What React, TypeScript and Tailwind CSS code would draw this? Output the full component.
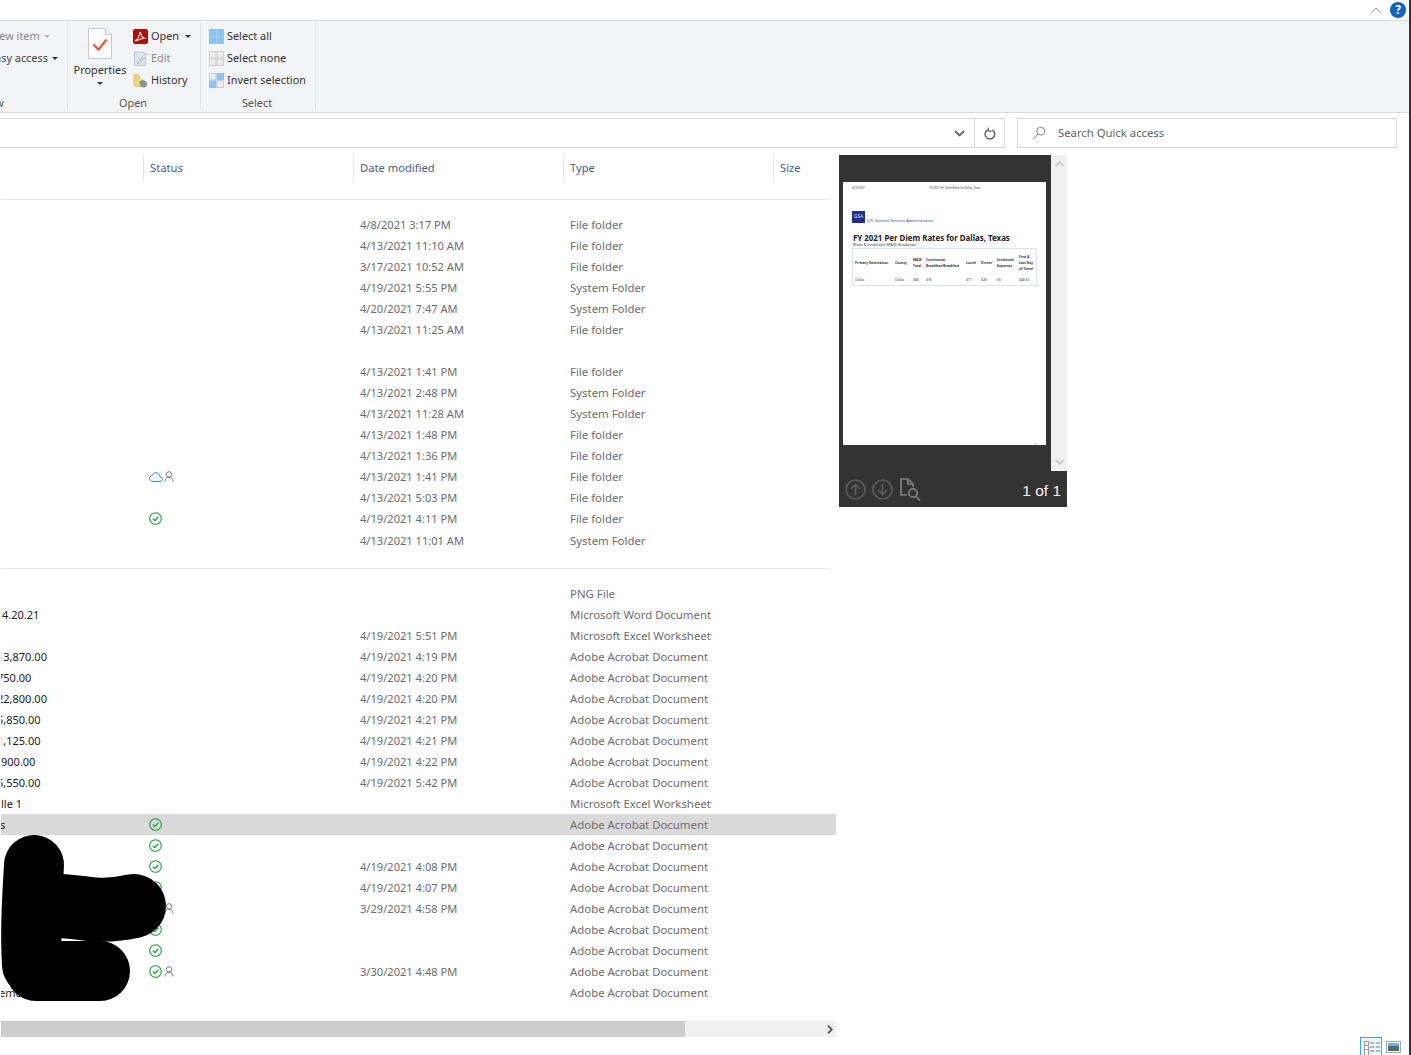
import React from "react";

const font = "font-['Noto_Sans','Open_Sans',sans-serif]";

type Row = { date?: string; type?: string; name?: string; nameClass?: string; status?: "cloud" | "check" | "checkUser" | "user"; selected?: boolean; tall?: boolean };

const folders1: Row[] = [
  { date: "4/8/2021 3:17 PM", type: "File folder" },
  { date: "4/13/2021 11:10 AM", type: "File folder" },
  { date: "3/17/2021 10:52 AM", type: "File folder" },
  { date: "4/19/2021 5:55 PM", type: "System Folder" },
  { date: "4/20/2021 7:47 AM", type: "System Folder" },
  { date: "4/13/2021 11:25 AM", type: "File folder" },
  {},
  { date: "4/13/2021 1:41 PM", type: "File folder" },
  { date: "4/13/2021 2:48 PM", type: "System Folder" },
  { date: "4/13/2021 11:28 AM", type: "System Folder" },
  { date: "4/13/2021 1:48 PM", type: "File folder" },
  { date: "4/13/2021 1:36 PM", type: "File folder" },
  { date: "4/13/2021 1:41 PM", type: "File folder", status: "cloud" },
  { date: "4/13/2021 5:03 PM", type: "File folder" },
  { date: "4/19/2021 4:11 PM", type: "File folder", status: "check" },
  { date: "4/13/2021 11:01 AM", type: "System Folder", tall: true },
];

const acrobat = "Adobe Acrobat Document";
const files: Row[] = [
  { type: "PNG File" },
  { type: "Microsoft Word Document", name: "4.20.21", nameClass: "ml-[1px]" },
  { date: "4/19/2021 5:51 PM", type: "Microsoft Excel Worksheet" },
  { date: "4/19/2021 4:19 PM", type: acrobat, name: "13,870.00", nameClass: "-ml-[4px]" },
  { date: "4/19/2021 4:20 PM", type: acrobat, name: "750.00", nameClass: "-ml-[4px]" },
  { date: "4/19/2021 4:20 PM", type: acrobat, name: "22,800.00", nameClass: "-ml-[4px]" },
  { date: "4/19/2021 4:21 PM", type: acrobat, name: "5,850.00", nameClass: "-ml-[4px]" },
  { date: "4/19/2021 4:21 PM", type: acrobat, name: "1,125.00", nameClass: "-ml-[4px]" },
  { date: "4/19/2021 4:22 PM", type: acrobat, name: "900.00" },
  { date: "4/19/2021 5:42 PM", type: acrobat, name: "5,550.00", nameClass: "-ml-[4px]" },
  { type: "Microsoft Excel Worksheet", name: "lle 1" },
  { type: acrobat, name: "s", nameClass: "-ml-[1px]", status: "check", selected: true },
  { type: acrobat, status: "check" },
  { date: "4/19/2021 4:08 PM", type: acrobat, status: "check" },
  { date: "4/19/2021 4:07 PM", type: acrobat, status: "check" },
  { date: "3/29/2021 4:58 PM", type: acrobat, status: "checkUser" },
  { type: acrobat, status: "check" },
  { type: acrobat, status: "check" },
  { date: "3/30/2021 4:48 PM", type: acrobat, status: "checkUser" },
  { type: acrobat, name: "ements", nameClass: "-ml-[2px]" },
];

function CheckIcon() {
  return (
    <svg width="13" height="13" viewBox="0 0 13 13" fill="none" stroke="#1f9d40" strokeWidth="1.100">
      <circle cx="6.500" cy="6.500" r="5.800" />
      <path d="M3.800 6.600l2 2 3.600-3.800" strokeWidth="1.300" />
    </svg>
  );
}

function UserIcon() {
  return (
    <svg width="10" height="11" viewBox="0 0 10 11" fill="none" stroke="#7d7d7d" strokeWidth="1">
      <circle cx="5" cy="3.400" r="2.700" />
      <path d="M1 10.500c0-2.600 1.600-4.400 4-4.400s4 1.800 4 4.400" />
    </svg>
  );
}

function CloudIcon() {
  return (
    <svg width="14" height="10" viewBox="0 0 14 10" fill="none" stroke="#2a86d8" strokeWidth="1">
      <path d="M3.400 9.400H11c1.400 0 2.400-1 2.400-2.200S12.400 5 11 5c-.2-2.400-2-4.300-4.300-4.300C5 .7 3.800 1.800 3.400 3.400 1.800 3.600.6 4.800.6 6.400s1.200 3 2.800 3z" />
    </svg>
  );
}

function Status({ kind }: { kind?: Row["status"] }) {
  if (!kind) return null;
  return (
    <div className="flex items-center gap-[1px]">
      <span className="flex w-[14px]">{kind === "cloud" ? <CloudIcon /> : <CheckIcon />}</span>
      {kind !== "check" && <UserIcon />}
    </div>
  );
}

function FileRow({ row }: { row: Row }) {
  return (
    <div className={`flex h-[21px] items-center text-[11.400px] text-[#6d6d6d] ${row.selected ? "bg-[#d9d9d9]" : ""} ${row.tall ? "mt-[1px]" : ""}`}>
      <div className="w-[148px] shrink-0 overflow-hidden whitespace-nowrap pt-[2px] text-[11px] text-[#1c1c1c]">
        {row.name && <span className={`block ${row.nameClass ?? ""}`}>{row.name}</span>}
      </div>
      <div className="w-[211px] shrink-0"><Status kind={row.status} /></div>
      <div className="w-[210px] shrink-0 whitespace-nowrap pt-[2px] text-[11.100px]">{row.date}</div>
      <div className="whitespace-nowrap">{row.type}</div>
    </div>
  );
}

function HeaderCell({ label, className }: { label: string; className: string }) {
  return (
    <div className={`flex h-[26px] shrink-0 items-center border-l border-[#e5e5e5] pl-[6px] text-[11.200px] text-[#4c607a] ${className}`}>
      {label}
    </div>
  );
}

function RibbonItem({ icon, label, caret, muted }: { icon: React.ReactNode; label: string; caret?: boolean; muted?: boolean }) {
  return (
    <div className={`flex h-[22px] items-center gap-[3px] whitespace-nowrap text-[10.900px] ${muted ? "text-[#8a8a8a]" : "text-[#333]"}`}>
      <span className="flex h-[16px] w-[16px] items-center justify-center">{icon}</span>
      {label}
      {caret && <span className="ml-[3px] h-0 w-0 border-x-[3px] border-t-[3px] border-x-transparent border-t-[#333]" />}
    </div>
  );
}

function PdfIcon() {
  return (
    <svg width="15" height="15" viewBox="0 0 15 15">
      <rect width="15" height="15" rx="2" fill="#b30b00" />
      <path d="M2.500 11.500c2-1 3.500-4 4.300-7.500.2-1 1-.8 1 .2 0 2.500 2 5 4.700 5.300-3-.2-6.500.5-8.500 2-.7.500-1.500.4-1.500 0z" fill="none" stroke="#fff" strokeWidth="1.100" />
    </svg>
  );
}

function EditIcon() {
  return (
    <svg width="15" height="15" viewBox="0 0 15 15" fill="none">
      <path d="M1.500 1h8l3 3v10.500h-11z" fill="#dde7f3" stroke="#b9c6d6" />
      <path d="M5 11l8-9 1.500 1.300-8 9-2 .5z" fill="#fff" stroke="#a9b7c8" />
    </svg>
  );
}

function HistoryIcon() {
  return (
    <svg width="15" height="15" viewBox="0 0 15 15">
      <path d="M1 1.500h4l1 2h1v10H3l-2-1z" fill="#f3d677" stroke="#d9b44e" strokeWidth=".7" />
      <circle cx="10.500" cy="11" r="3.500" fill="#8e9297" />
      <path d="M6.500 9.500l3-3 1 1-3 3z" fill="#3f9d4a" />
    </svg>
  );
}

function GridIcon({ kind }: { kind: "all" | "none" | "invert" }) {
  const on = "#8cc4f0";
  const off = "#ececec";
  const fills = kind === "all" ? [on, on, on, on] : kind === "none" ? [off, off, off, off] : [off, on, on, off];
  return (
    <svg width="15" height="15" viewBox="0 0 15 15">
      <rect x=".5" y=".5" width="6.500" height="6.500" fill={fills[0]} stroke={kind === "all" ? on : "#cfcfcf"} />
      <rect x="8" y=".5" width="6.500" height="6.500" fill={fills[1]} stroke={kind === "none" ? "#cfcfcf" : on} />
      <rect x=".5" y="8" width="6.500" height="6.500" fill={fills[2]} stroke={kind === "none" ? "#cfcfcf" : on} />
      <rect x="8" y="8" width="6.500" height="6.500" fill={fills[3]} stroke={kind === "all" ? on : "#cfcfcf"} />
    </svg>
  );
}

function Ribbon() {
  return (
    <div className="flex h-[93px] border-b border-t border-[#dadbdc] bg-[#f3f4f6]">
      <div className="mb-[3px] mt-[2px] flex w-[68px] flex-col justify-between overflow-hidden border-r border-[#dfe0e2]">
        <div className="pt-[2px]">
          <div className="flex h-[22px] items-center gap-[4px] whitespace-nowrap text-[10.900px] text-[#8a8a8a]">
            <span className="-ml-[9px]">New item</span>
            <span className="h-0 w-0 border-x-[3px] border-t-[3px] border-x-transparent border-t-[#bbb]" />
          </div>
          <div className="flex h-[22px] items-center gap-[4px] whitespace-nowrap text-[10.900px] text-[#444]">
            <span className="-ml-[11px]">Easy access</span>
            <span className="h-0 w-0 border-x-[3px] border-t-[3px] border-x-transparent border-t-[#333]" />
          </div>
        </div>
        <span className="-ml-[19px] text-[10.900px] leading-[12px] text-[#555]">New</span>
      </div>
      <div className="mb-[3px] mt-[2px] flex w-[133px] flex-col border-r border-[#dfe0e2]">
        <div className="flex flex-1 pt-[2px]">
          <div className="flex w-[64px] flex-col items-center pt-[3px] text-[10.900px] leading-[14px] text-[#333]">
            <svg width="24" height="31" viewBox="0 0 24 31">
              <path d="M.5.500h17l6 6v24H.5z" fill="#fff" stroke="#c9c9c9" />
              <path d="M17.500.500v6h6" fill="#eee" stroke="#c9c9c9" />
              <path d="M5.500 16.500l5 5 8-10" fill="none" stroke="#e8572a" strokeWidth="2.200" />
            </svg>
            <span className="mt-[4px]">Properties</span>
            <span className="mt-[5px] h-0 w-0 border-x-[3px] border-t-[3px] border-x-transparent border-t-[#333]" />
          </div>
          <div className="flex flex-col">
            <RibbonItem icon={<PdfIcon />} label="Open" caret />
            <RibbonItem icon={<EditIcon />} label="Edit" muted />
            <RibbonItem icon={<HistoryIcon />} label="History" />
          </div>
        </div>
        <span className="pr-[2px] text-center text-[10.900px] leading-[12px] text-[#555]">Open</span>
      </div>
      <div className="mb-[3px] mt-[2px] flex w-[115px] flex-col border-r border-[#dfe0e2]">
        <div className="flex flex-1 flex-col pl-[7px] pt-[2px]">
          <RibbonItem icon={<GridIcon kind="all" />} label="Select all" />
          <RibbonItem icon={<GridIcon kind="none" />} label="Select none" />
          <RibbonItem icon={<GridIcon kind="invert" />} label="Invert selection" />
        </div>
        <span className="pr-[2px] text-center text-[10.900px] leading-[12px] text-[#555]">Select</span>
      </div>
    </div>
  );
}

function AddressRow() {
  return (
    <div className="flex h-[35px] items-end gap-[12px] pr-[12px]">
      <div className="flex h-[30px] flex-1 items-center justify-end border-y border-r border-[#d9d9d9]">
        <svg width="11" height="7" viewBox="0 0 11 7" fill="none" stroke="#666" strokeWidth="1.800" className="mr-[9px]">
          <path d="M1 1l4.500 4.500L10 1" />
        </svg>
        <div className="flex h-full w-[30px] items-center justify-center border-l border-[#d9d9d9]">
          <svg width="12" height="13" viewBox="0 0 12 13" fill="none" stroke="#666" strokeWidth="1.500">
            <path d="M4 2.700A4.800 4.800 0 1 0 8.400 3" />
            <path d="M4.200.6v3.500h3.400" strokeWidth="1.200" />
          </svg>
        </div>
      </div>
      <div className="flex h-[30px] w-[380px] items-center border border-[#d9d9d9] pl-[14px] text-[11.300px] text-[#666]">
        <svg width="14" height="14" viewBox="0 0 14 14" fill="none" stroke="#8a8a8a" className="mr-[12px]">
          <circle cx="8.800" cy="5.200" r="4" />
          <path d="M5.800 8L1 13" stroke="#b08a7a" />
        </svg>
        Search Quick access
      </div>
    </div>
  );
}

function PreviewPage() {
  return (
    <div className="mx-[4px] mt-[27px] h-[263px] w-[203px] bg-white px-[9px] pt-[4px] text-[#333]">
      <div className="flex gap-[65px] whitespace-nowrap text-[2.700px] leading-[4px]">
        <span>4/19/2021</span>
        <span>FY 2021 Per Diem Rates for Dallas, Texas</span>
      </div>
      <div className="mt-[21px] flex items-end gap-[2px]">
        <div className="flex h-[12px] w-[13px] items-center justify-center bg-[#1f2f8f] text-[5px] text-[#d8dcf2]">GSA</div>
        <span className="text-[3.900px] leading-[5px] text-[#2d3f9f]">U.S. General Services Administration</span>
      </div>
      <div className="ml-[1px] mt-[10px] whitespace-nowrap text-[7.900px] font-bold leading-[10px] text-[#222]">FY 2021 Per Diem Rates for Dallas, Texas</div>
      <div className="ml-[1px] text-[3.500px] leading-[4px]">Meals & Incidentals (M&IE) Breakdown</div>
      <div className="mt-[1px] h-[38px] w-[185px] border border-[#dde3ea] px-[2px] text-[3.300px] font-bold leading-[6px] text-[#333]">
        <div className="grid h-[28px] grid-cols-[40px_18px_13px_40px_15px_16px_22px_1fr] items-center">
          <span>Primary Destination</span>
          <span>County</span>
          <span>M&IE Total</span>
          <span>Continental Breakfast/Breakfast</span>
          <span>Lunch</span>
          <span>Dinner</span>
          <span>Incidental Expenses</span>
          <span>First & Last Day of Travel</span>
        </div>
        <div className="grid grid-cols-[40px_18px_13px_40px_15px_16px_22px_1fr] items-center font-normal">
          <span>Dallas</span>
          <span>Dallas</span>
          <span>$66</span>
          <span>$16</span>
          <span>$17</span>
          <span>$28</span>
          <span>$5</span>
          <span>$49.50</span>
        </div>
      </div>
      <div className="mt-[157px] text-right text-[2.700px] leading-[4px] text-[#777]">1/1</div>
    </div>
  );
}

function Preview() {
  return (
    <div className="mt-[7px] flex h-[352px] w-[228px] flex-col bg-[#333]">
      <div className="flex h-[316px]">
        <div className="w-[212px]"><PreviewPage /></div>
        <div className="flex w-[16px] flex-col items-center justify-between bg-[#f0f0f0] py-[6px]">
          <svg width="9" height="6" viewBox="0 0 9 6" fill="none" stroke="#c9c9c9" strokeWidth="1.800"><path d="M.7 5l3.800-3.800L8.300 5" /></svg>
          <svg width="9" height="6" viewBox="0 0 9 6" fill="none" stroke="#c9c9c9" strokeWidth="1.800"><path d="M.7 1l3.800 3.800L8.300 1" /></svg>
        </div>
      </div>
      <div className="flex flex-1 items-center pl-[6px] pr-[6px]">
        <svg width="21" height="21" viewBox="0 0 21 21" fill="none" stroke="#5c5c5c" strokeWidth="1.700" className="mr-[6px]">
          <circle cx="10.500" cy="10.500" r="9.500" /><path d="M10.500 16V5.500M6 10l4.500-4.500L15 10" />
        </svg>
        <svg width="21" height="21" viewBox="0 0 21 21" fill="none" stroke="#5c5c5c" strokeWidth="1.700" className="mr-[7px]">
          <circle cx="10.500" cy="10.500" r="9.500" /><path d="M10.500 5v10.500M6 11l4.500 4.500L15 11" />
        </svg>
        <svg width="23" height="23" viewBox="0 0 23 23" fill="none" stroke="#808080" strokeWidth="1.700">
          <path d="M7 17H1V1h7l5 5v3" /><path d="M8 1v5h5" />
          <circle cx="13" cy="15" r="4.200" /><path d="M16 18.500l4 4" />
        </svg>
        <span className="ml-auto mt-[4px] font-['Liberation_Sans',sans-serif] text-[15.500px] text-[#f2f2f2]">1 of 1</span>
      </div>
    </div>
  );
}

export default function App() {
  return (
    <div className={`relative h-[1055px] w-[1411px] overflow-hidden bg-white pr-[2px] ${font}`}>
      <div className="flex h-[20px] items-center justify-end gap-[9px] pr-[3px]">
        <svg width="10" height="6" viewBox="0 0 10 6" fill="none" stroke="#a6a6a6" strokeWidth="1"><path d="M.5 5.500L5 1l4.500 4.500" /></svg>
        <div className="flex h-[16px] w-[16px] items-center justify-center rounded-full bg-[#0b63c5] text-[12px] font-bold text-white">?</div>
      </div>
      <Ribbon />
      <AddressRow />
      <div className="flex">
        <div className="relative w-[836px] pl-[1px]">
          <div className="mr-[6px] flex h-[52px] items-start border-b border-[#e5e5e5] pt-[7px]">
            <div className="w-[142px] shrink-0" />
            <HeaderCell label="Status" className="w-[210px]" />
            <HeaderCell label="Date modified" className="w-[210px]" />
            <HeaderCell label="Type" className="w-[210px]" />
            <HeaderCell label="Size" className="w-[56px]" />
          </div>
          <div className="pt-[14px]">
            {folders1.map((r, i) => <FileRow key={i} row={r} />)}
          </div>
          <div className="mb-[14px] mr-[6px] mt-[17px] border-b border-[#e5e5e5]" />
          {files.map((r, i) => <FileRow key={i} row={r} />)}
          <div className="mt-[18px] flex h-[16px] items-center bg-[#f0f0f0]">
            <div className="h-full w-[684px] bg-[#cdcdcd]" />
            <svg width="6" height="9" viewBox="0 0 6 9" fill="none" stroke="#555" strokeWidth="1.800" className="ml-auto mr-[3px]"><path d="M1 .7l3.800 3.800L1 8.300" /></svg>
          </div>
        </div>
        <div className="ml-[3px]"><Preview /></div>
      </div>
      <div className="absolute bottom-0 right-[10px] flex items-end gap-[4px]">
        <svg width="22" height="18" viewBox="0 0 22 18" fill="none">
          <rect x=".5" y=".5" width="21" height="18" fill="#eaf5fc" stroke="#3ea6e6" />
          <rect x="4.500" y="4.500" width="4" height="14" fill="#fff" stroke="#9a9a9a" />
          <path d="M4.500 8.500h4M4.500 12.500h4" stroke="#9a9a9a" />
          <path d="M10 6h4.500M16 6h4M10 10h4.500M16 10h4M10 14h4.500M16 14h4" stroke="#7d7d7d" strokeWidth="1.200" />
        </svg>
        <svg width="15" height="12" viewBox="0 0 15 12" className="mb-[2px]">
          <rect x=".5" y=".5" width="14" height="11" fill="#fff" stroke="#a6a6a6" />
          <rect x="2" y="2" width="11" height="3" fill="#6db3ec" />
          <rect x="2" y="5" width="11" height="5" fill="#4d6f66" />
        </svg>
      </div>
      {/* scribble someone drew over the filenames */}
      <svg width="180" height="180" viewBox="0 0 180 180" className="absolute left-0 top-[830px]" fill="none" stroke="#000" strokeWidth="60" strokeLinecap="round" strokeLinejoin="round">
        <path d="M34 35C32 70 30 100 32 135" />
        <path d="M36 141H100" />
        <path d="M40 76C70 72 90 86 134 76" strokeWidth="64" />
      </svg>
      <div className="absolute right-0 top-0 h-full w-[2px] bg-[#333]" />
    </div>
  );
}
